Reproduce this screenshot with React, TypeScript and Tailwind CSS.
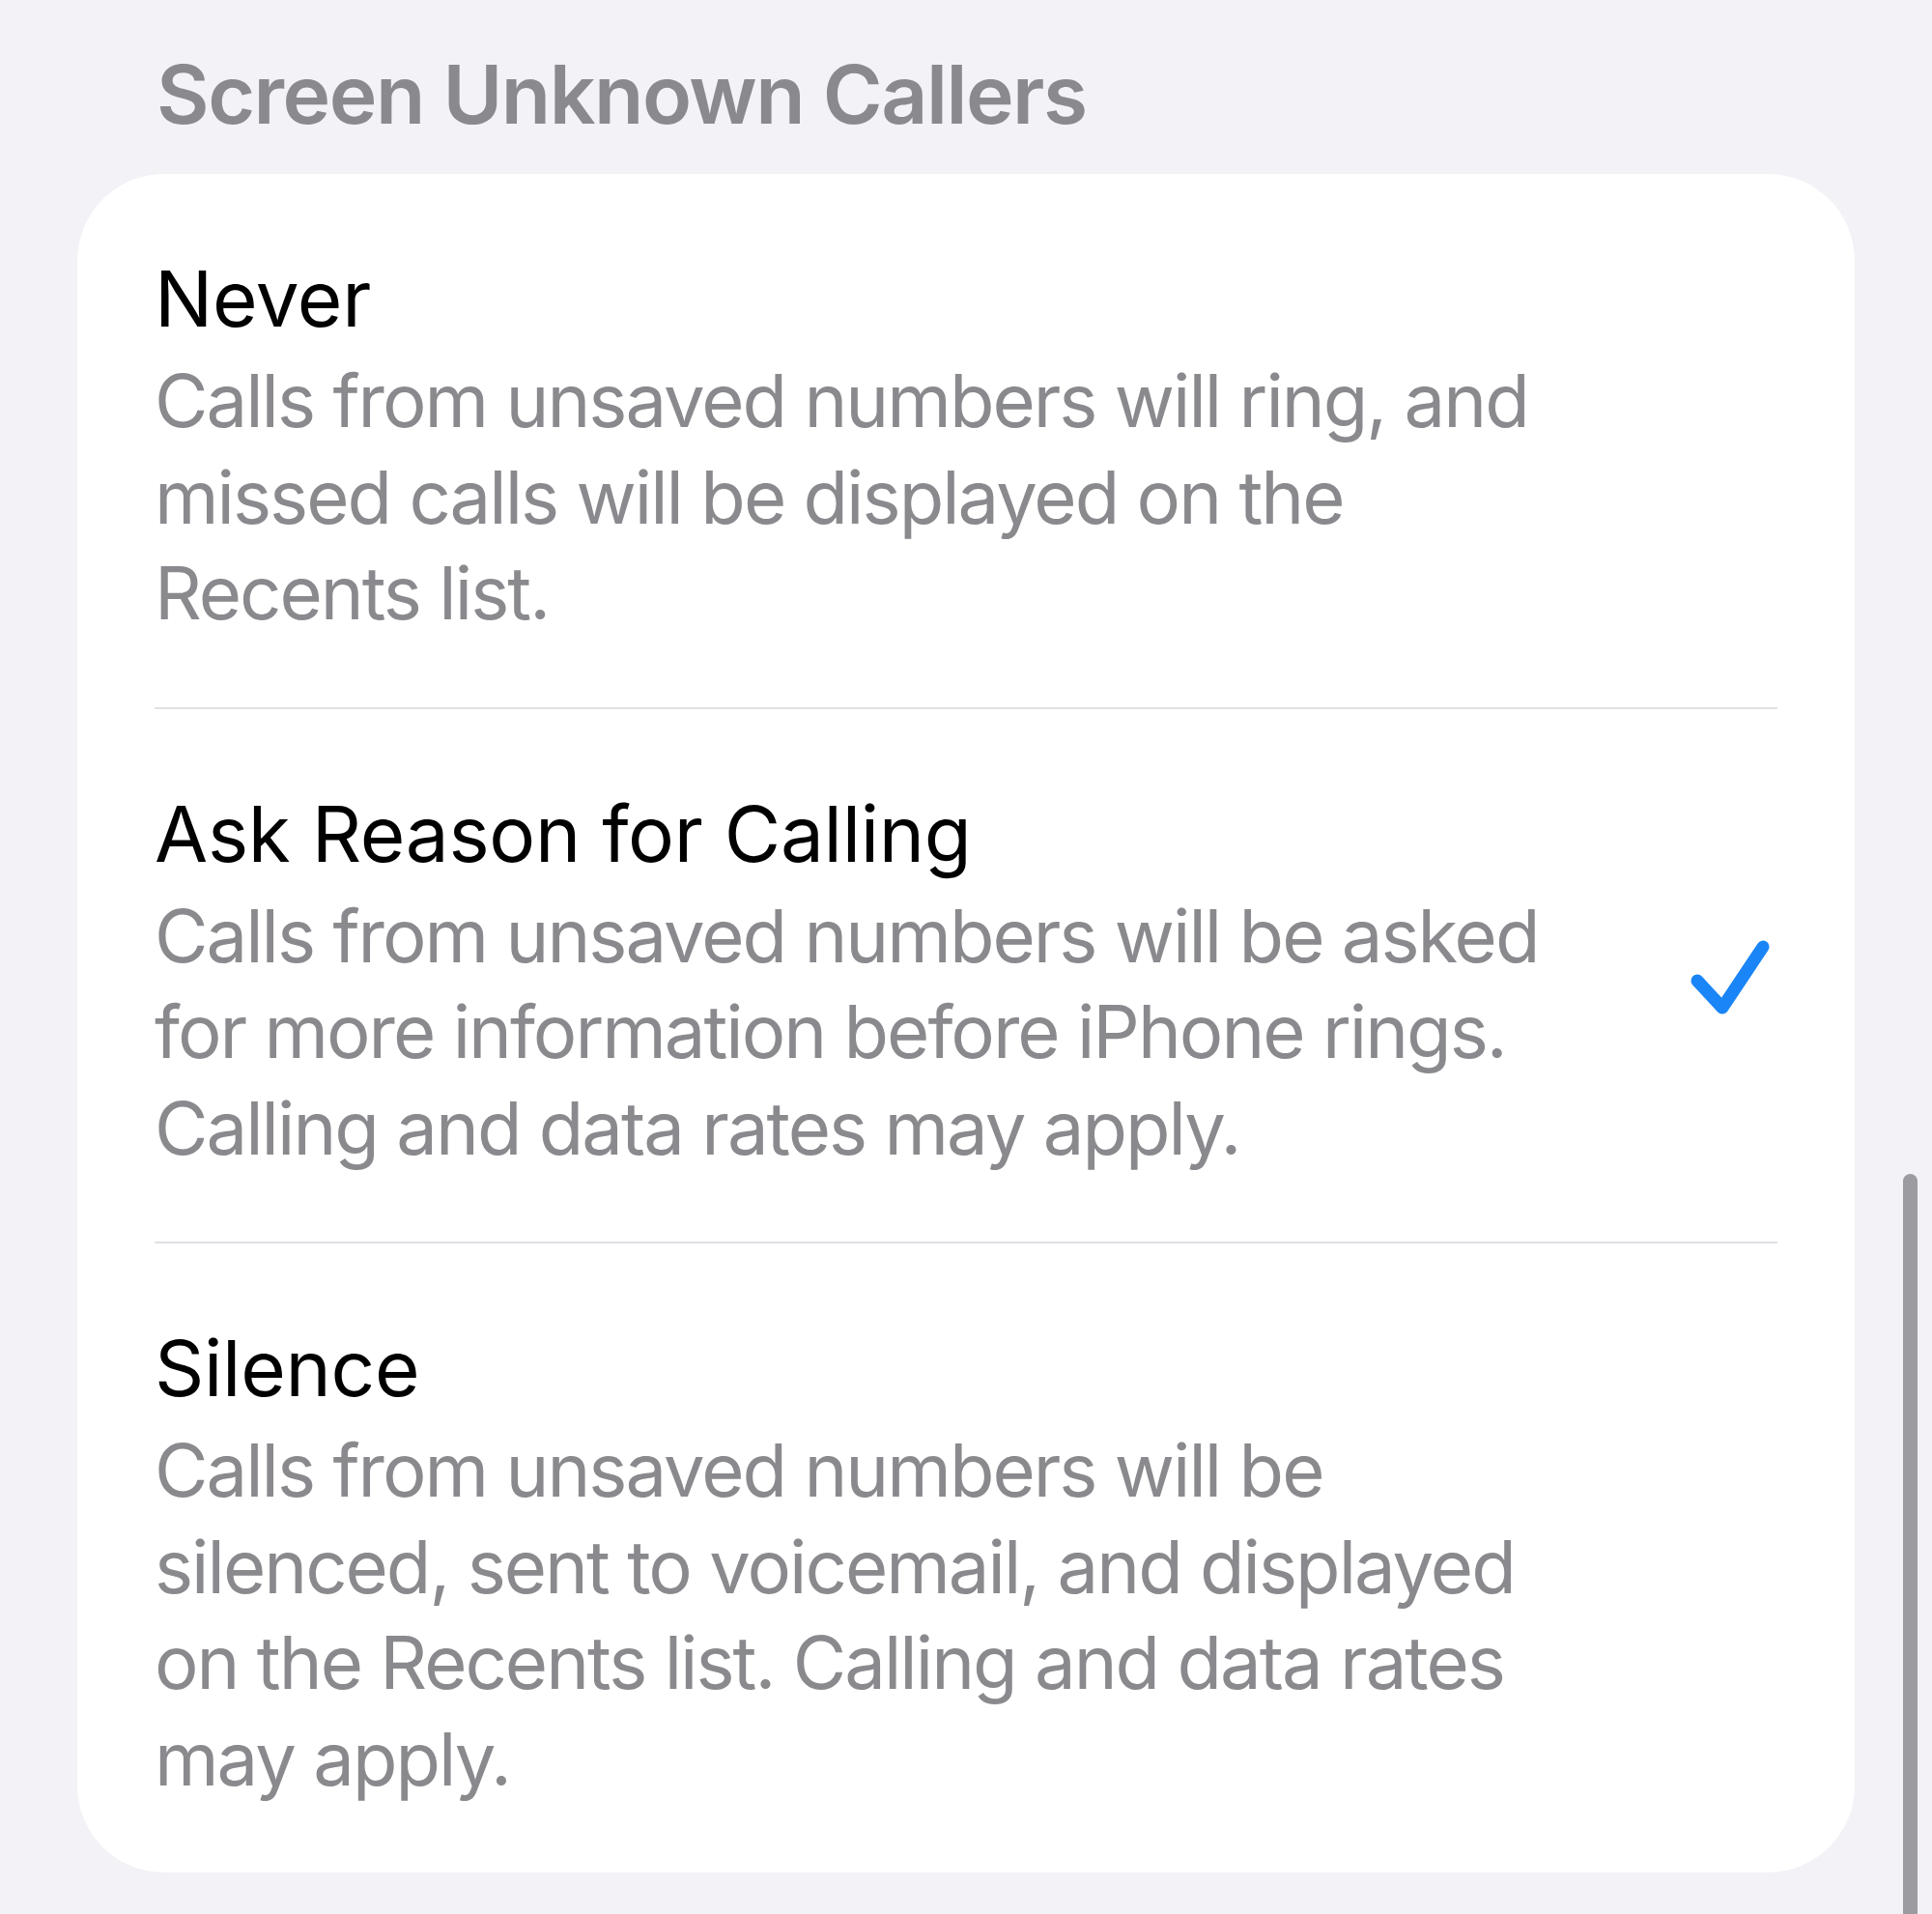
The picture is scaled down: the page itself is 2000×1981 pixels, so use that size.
const options = [
  {
    title: 'Never',
    lines: ['Calls from unsaved numbers will ring, and', 'missed calls will be displayed on the', 'Recents list.'],
    checked: false,
  },
  {
    title: 'Ask Reason for Calling',
    lines: [
      'Calls from unsaved numbers will be asked',
      'for more information before iPhone rings.',
      'Calling and data rates may apply.',
    ],
    checked: true,
  },
  {
    title: 'Silence',
    lines: [
      'Calls from unsaved numbers will be',
      'silenced, sent to voicemail, and displayed',
      'on the Recents list. Calling and data rates',
      'may apply.',
    ],
    checked: false,
  },
];

function Check() {
  return (
    <svg width="82" height="77" viewBox="0 0 82 77" fill="none">
      <path d="M7 42 L33 70 L75 7" stroke="#1a85f6" strokeWidth="13" strokeLinecap="round" strokeLinejoin="round" />
    </svg>
  );
}

export default function App() {
  return (
    <div className="relative min-h-[1981px] bg-[#f2f2f7] pt-[48px] font-['Inter','Noto_Sans',sans-serif] overflow-hidden">
      {/* section header */}
      <h2 className="ml-[162px] text-[84px] font-semibold leading-[100px] text-[#8a8a8e] tracking-[-1.5px]">
        Screen Unknown Callers
      </h2>

      {/* options card */}
      <div className="mx-[80px] mt-[32px] rounded-[90px] bg-white px-[80px]">
        {options.map((opt, i) => (
          <div
            key={opt.title}
            className={`flex items-center pt-[72px] pb-[68px] ${i < options.length - 1 ? 'border-b-2 border-[#e1e1e6]' : ''}`}
          >
            <div className="flex-1">
              <div className="text-[80px] leading-[113px] tracking-[-0.3px] text-black">{opt.title}</div>
              {opt.lines.map((l) => (
                <div key={l} className="whitespace-nowrap text-[76px] leading-[99.5px] tracking-[-2px] text-[#8a8a8e]">
                  {l}
                </div>
              ))}
            </div>
            {opt.checked && (
              <div className="mr-[8px]">
                <Check />
              </div>
            )}
          </div>
        ))}
      </div>

      {/* scroll indicator */}
      <div className="absolute right-[15px] top-[1215px] bottom-0 w-[15px] rounded-t-full bg-[#9b9ba1]" />
    </div>
  );
}
